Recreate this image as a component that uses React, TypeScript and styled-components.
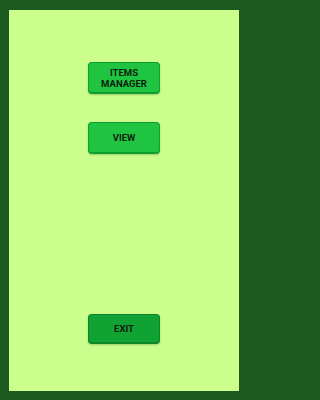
import React from 'react';
import styled, { createGlobalStyle } from 'styled-components';

const GlobalStyle = createGlobalStyle`
  html, body {
    margin: 0;
    padding: 0;
    height: 100%;
  }
  body {
    font-family: Roboto, 'Liberation Sans', sans-serif;
    background: #1d5a22;
  }
  #root {
    height: 100%;
  }
`;

const Frame = styled.div`
  box-sizing: border-box;
  width: 248px;
  height: 400px;
  padding: 10px 9px 9px 9px;
  background: #1d5a22;
`;

const Panel = styled.div`
  height: 100%;
  background: #ccfe8e;
  display: flex;
  flex-direction: column;
  align-items: center;
  padding-top: 52px;
  box-sizing: border-box;
`;

const MenuButton = styled.button<{ $dark?: boolean; $gap?: number }>`
  box-sizing: border-box;
  width: 72px;
  height: ${(p) => (p.$dark ? 30 : 32)}px;
  margin-top: ${(p) => p.$gap ?? 0}px;
  border: 1px solid ${(p) => (p.$dark ? '#0c8427' : '#139c32')};
  border-bottom-width: 2px;
  border-radius: 4px;
  background: ${(p) => (p.$dark ? '#10a232' : '#1fc541')};
  box-shadow: 0 1px 2px rgba(0, 60, 0, 0.25);
  color: #0e1e0e;
  font-family: Roboto, 'Liberation Sans', sans-serif;
  font-weight: 700;
  font-size: 9.5px;
  line-height: 11px;
  text-transform: uppercase;
  padding: 0;
  display: flex;
  align-items: center;
  justify-content: center;
  text-align: center;
`;

export default function App() {
  return (
    <>
      <GlobalStyle />
      <Frame>
        <Panel>
          <MenuButton>
            Items
            <br />
            Manager
          </MenuButton>
          <MenuButton $gap={28}>View</MenuButton>
          <MenuButton $dark $gap={160}>
            Exit
          </MenuButton>
        </Panel>
      </Frame>
    </>
  );
}
